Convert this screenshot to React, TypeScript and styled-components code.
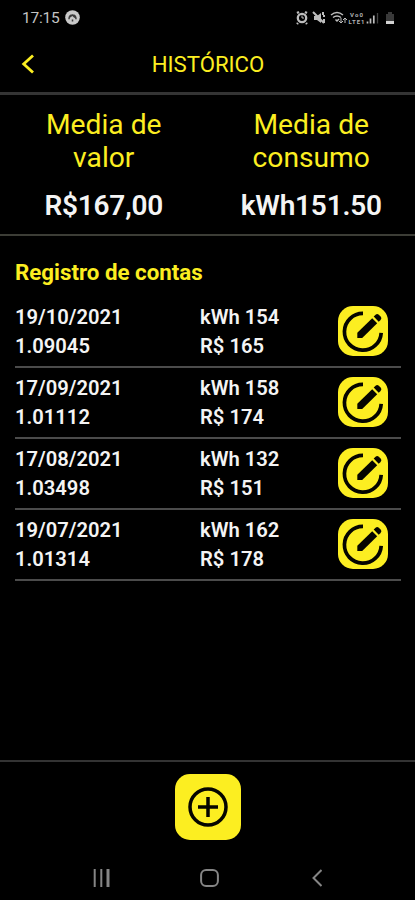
import React from "react";
import styled, { createGlobalStyle } from "styled-components";

const YELLOW = "#fcee21";

const GlobalStyle = createGlobalStyle`
  *, *::before, *::after { box-sizing: border-box; }
  html, body, #root { margin: 0; padding: 0; background: #000; }
  body { font-family: Roboto, "Liberation Sans", sans-serif; }
  svg { display: block; }
  button { border: 0; padding: 0; background: none; font: inherit; color: inherit; }
`;

const Screen = styled.div`
  display: flex;
  flex-direction: column;
  width: 415px;
  height: 900px;
  overflow: hidden;
  background: #000;
  color: #f4f4f4;
`;

const StatusBar = styled.div`
  display: flex;
  align-items: center;
  height: 35px;
  padding: 0 19px 0 22px;
  color: #c4c4c4;
`;

const Clock = styled.span`
  width: 38px;
  margin-right: 5px;
  font-size: 15.5px;
  line-height: 20px;
  letter-spacing: -0.2px;
  white-space: nowrap;
`;

const StatusIcons = styled.div`
  display: flex;
  align-items: center;
  margin-left: auto;
`;

const Header = styled.header`
  display: grid;
  grid-template-columns: 60px 1fr 59px;
  align-items: center;
  height: 60px;
  border-bottom: 3px solid #343434;
  color: ${YELLOW};
`;

const BackButton = styled.button`
  display: flex;
  padding-left: 21px;
`;

const Title = styled.h1`
  margin: 0;
  font-size: 22.2px;
  font-weight: 400;
  line-height: 28px;
  text-align: center;
`;

const Stats = styled.section`
  display: grid;
  grid-template-columns: 1fr 1fr;
  height: 141px;
  padding-top: 13px;
  border-bottom: 2px solid #3c3d36;
`;

const Stat = styled.div`
  display: flex;
  flex-direction: column;
  align-items: center;
`;

const StatLabel = styled.h2`
  width: 130px;
  margin: 0;
  color: ${YELLOW};
  font-size: 28.2px;
  font-weight: 400;
  line-height: 33px;
  text-align: center;
`;

const StatValue = styled.strong`
  margin-top: 15px;
  font-size: 28px;
  font-weight: 600;
  letter-spacing: -0.2px;
  line-height: 34px;
`;

const Records = styled.main`
  flex: 1;
  padding: 22px 14px 0 15px;
`;

const RecordsTitle = styled.h3`
  margin: 0;
  color: ${YELLOW};
  font-size: 22.3px;
  font-weight: 700;
  line-height: 28px;
`;

const RecordList = styled.ul`
  margin: 11px 0 0;
  padding: 0;
  list-style: none;
`;

const Record = styled.li`
  display: grid;
  grid-template-columns: 185px 1fr 63px;
  height: 71px;
  border-bottom: 2px solid #4b4b4b;
`;

const Cell = styled.div`
  padding-top: 6px;
  font-size: 20.2px;
  font-weight: 600;
  line-height: 29px;
  white-space: nowrap;
`;

const EditButton = styled.button`
  display: grid;
  place-items: center;
  width: 50px;
  height: 50px;
  margin-top: 9px;
  border-radius: 15px;
  background: ${YELLOW};
  color: #050500;
`;

const Footer = styled.footer`
  display: flex;
  justify-content: center;
  height: 95px;
  padding: 12px 0 0 1px;
  border-top: 2px solid #333;
`;

const AddButton = styled.button`
  display: grid;
  place-items: center;
  width: 66px;
  height: 66px;
  border-radius: 15px;
  background: ${YELLOW};
  color: #050500;
`;

const NavBar = styled.nav`
  display: grid;
  grid-template-columns: 108px 110px 12px;
  align-items: center;
  height: 45px;
  padding-left: 92px;
  color: #858585;
`;

const AppBadge = () => (
  <svg width="15" height="15" viewBox="0 0 15 15">
    <circle cx="7.5" cy="7.5" r="7.3" fill="#c9c9c9" />
    <path d="M4 9.2C4 3.5 11 3.5 11 9.2M5 7l2.3-2L10 7.5M7.5 9.5v2" fill="none" stroke="#3b3b3b" strokeWidth="1.5" />
  </svg>
);

const StatusGlyphs = () => (
  <svg width="100" height="16" viewBox="296 9 100 16" fill="none" stroke="#bdbdbd">
    <circle cx="302" cy="17" r="4.2" strokeWidth="2.3" />
    <path d="M297 12l2-1M307 12l-2-1M298 22l-1 1M306 22l1 1" strokeWidth="2.4" />
    <path d="M302 14.5V17h2" strokeWidth="1" />
    <path d="M314 15h3l4-3v10l-4-3h-3z" fill="#bbb" stroke="none" />
    <path d="M313 11l11 11M323 11v3M325 15h-2M324 18v4" strokeWidth="2" />
    <path d="M331 14q6-5 12 0M333 16.5q4-3 8 0M335.5 18.5l1.5 1.5 2-2" strokeWidth="1.5" />
    <path d="M341 17v5m-2-2l2 2 2-2M345 22v-5m-2 2l2-2 2 2" strokeWidth="1" />
    <text x="350" y="15.8" fill="#b2b2b2" stroke="none" fontFamily="Roboto" fontSize="6" fontWeight="700" textLength="13">Vo0</text>
    <text x="348.5" y="22.9" fill="#b2b2b2" stroke="none" fontFamily="Roboto" fontSize="6" fontWeight="700" textLength="16">LTE1</text>
    <path d="M367.5 22.5v-2M370.5 22.5v-5M373.8 22.5v-8" strokeWidth="1.7" />
    <path d="M377.5 22.5V12" stroke="#444" strokeWidth="1.3" />
    <path d="M386 13h2v-2h4v2h2v10h-8z" fill="#393939" stroke="none" />
    <path d="M386 20h8v3h-8z" fill="#d2d2d2" stroke="none" />
  </svg>
);

const BackIcon = () => (
  <svg width="14" height="20" viewBox="0 0 14 20">
    <path d="M12 1.5L2.7 10 12 18.5" fill="none" stroke="currentColor" strokeWidth="2.8" />
  </svg>
);

const EditIcon = () => (
  <svg width="50" height="50" viewBox="0 0 50 50">
    <path d="M25 7.4A18.4 18.4 0 1 0 43.2 26.8" fill="none" stroke="currentColor" strokeWidth="3.7" />
    <path d="M19.3 26.8L34.2 12.2l5 5-15 14.8h-4.9z" fill="currentColor" />
    <path d="M35.7 10.6l1.9-1.8q1.6-1.4 3.2 0l2 2q1.3 1.5-.2 3.1l-1.9 1.8z" fill="currentColor" />
  </svg>
);

const AddIcon = () => (
  <svg width="40" height="40" viewBox="0 0 40 40" fill="none" stroke="currentColor" strokeWidth="3.5">
    <circle cx="20" cy="20" r="18" />
    <path d="M20 10v20M10 20h20" />
  </svg>
);

const RecentsIcon = () => (
  <svg width="19" height="18" viewBox="0 0 19 18" fill="none" stroke="currentColor">
    <path d="M2.7 0v18M9.3 0v18" strokeWidth="2" />
    <path d="M16 0v18" strokeWidth="3" />
  </svg>
);

const HomeIcon = () => (
  <svg width="19" height="18" viewBox="0 0 19 18">
    <rect x="1.1" y="1.1" width="16.8" height="15.8" rx="5" fill="none" stroke="currentColor" strokeWidth="2" />
  </svg>
);

const NavBackIcon = () => (
  <svg width="12" height="18" viewBox="0 0 12 18">
    <path d="M11.5 1l-8 8 8 8" fill="none" stroke="currentColor" strokeWidth="2" />
  </svg>
);

const records = [
  { date: "19/10/2021", rate: "1.09045", usage: 154, cost: 165 },
  { date: "17/09/2021", rate: "1.01112", usage: 158, cost: 174 },
  { date: "17/08/2021", rate: "1.03498", usage: 132, cost: 151 },
  { date: "19/07/2021", rate: "1.01314", usage: 162, cost: 178 },
];

export default function App() {
  return (
    <>
      <GlobalStyle />
      <Screen>
        <StatusBar>
          <Clock>17:15</Clock>
          <AppBadge />
          <StatusIcons>
            <StatusGlyphs />
          </StatusIcons>
        </StatusBar>
        <Header>
          <BackButton aria-label="Voltar">
            <BackIcon />
          </BackButton>
          <Title>HISTÓRICO</Title>
        </Header>
        <Stats>
          <Stat>
            <StatLabel>Media de valor</StatLabel>
            <StatValue>R$167,00</StatValue>
          </Stat>
          <Stat>
            <StatLabel>Media de consumo</StatLabel>
            <StatValue>kWh151.50</StatValue>
          </Stat>
        </Stats>
        <Records>
          <RecordsTitle>Registro de contas</RecordsTitle>
          <RecordList>
            {records.map((r) => (
              <Record key={r.date}>
                <Cell>
                  <div>{r.date}</div>
                  <div>{r.rate}</div>
                </Cell>
                <Cell>
                  <div>kWh {r.usage}</div>
                  <div>R$ {r.cost}</div>
                </Cell>
                <EditButton aria-label="Editar">
                  <EditIcon />
                </EditButton>
              </Record>
            ))}
          </RecordList>
        </Records>
        <Footer>
          <AddButton aria-label="Adicionar">
            <AddIcon />
          </AddButton>
        </Footer>
        <NavBar>
          <RecentsIcon />
          <HomeIcon />
          <NavBackIcon />
        </NavBar>
      </Screen>
    </>
  );
}
